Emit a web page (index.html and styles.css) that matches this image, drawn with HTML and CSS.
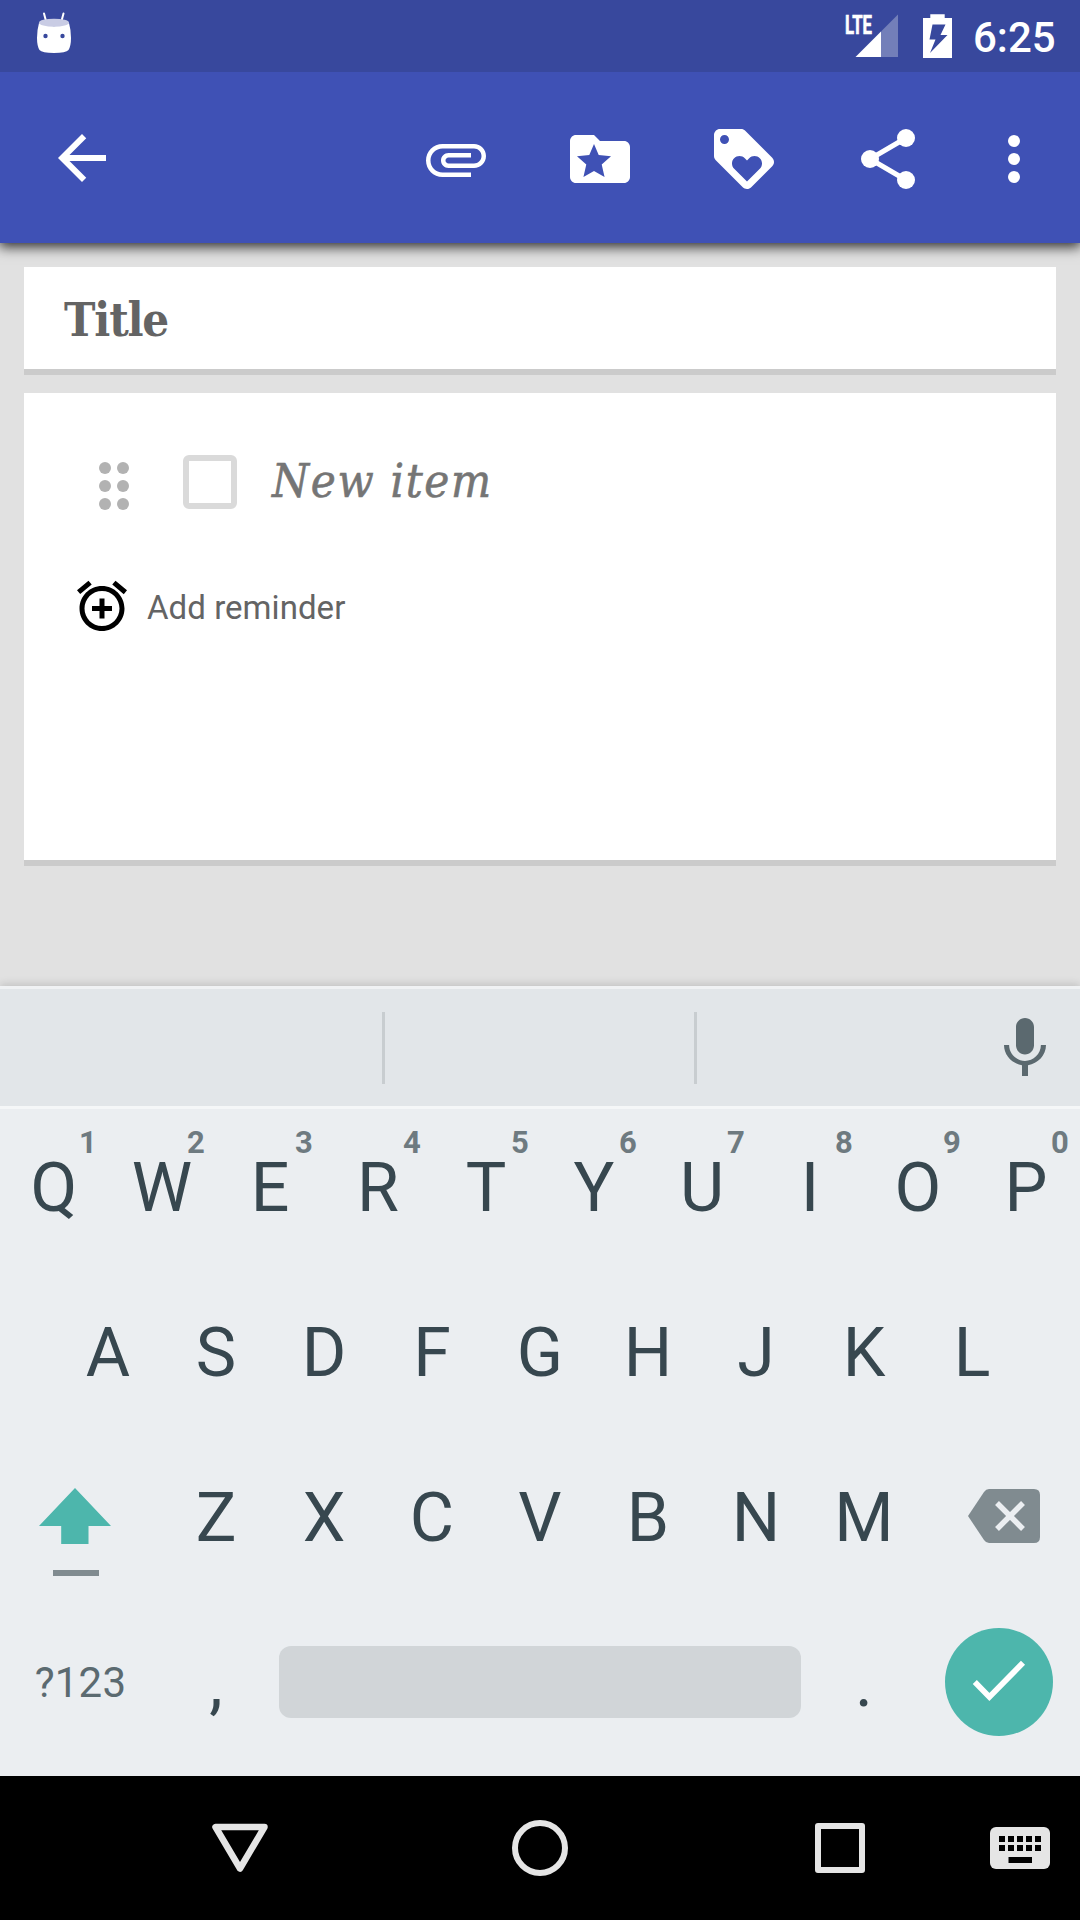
FILE: index.html
```html
<!DOCTYPE html>
<html lang="en">
<head>
<meta charset="utf-8">
<title>Edit note</title>
<link rel="stylesheet" href="styles.css">
</head>
<body>
<div class="screen">
  <header class="status">
    <svg class="status-robot" width="36" height="42" viewBox="36 12 36 42">
      <path d="M44 13.500L46 21M63.500 13.500L61.500 21" stroke="#fff" stroke-width="2" stroke-linecap="round"/>
      <path d="M39 23Q54 29.500 69 23Q71 30 71 38Q71 46 68.500 50Q66 53 54 53Q42 53 39.500 50Q37 46 37 38Q37 30 39 23z" fill="#fff"/>
      <ellipse cx="54" cy="22.700" rx="15" ry="4" fill="#c9cce4"/>
      <circle cx="45.500" cy="36" r="2.200" fill="#38489d"/><circle cx="62.500" cy="36" r="2.200" fill="#38489d"/>
    </svg>
    <svg class="status-signal" width="56" height="52" viewBox="844 7 56 52">
      <text class="lte" x="845" y="33.500" textLength="27" lengthAdjust="spacingAndGlyphs">LTE</text>
      <path d="M881 31.500L898 14.500V57H881z" fill="#737fb9"/>
      <path d="M855.500 57L881 31.500V57z" fill="#fff"/>
    </svg>
    <svg class="status-battery" width="30" height="46" viewBox="923 13 30 46">
      <path d="M930.300 14.200H944.700V18H952V58H923V18H930.300z" fill="#fff"/>
      <path d="M932.500 24.500H945.500L940.500 35H947.500L930 53L935.500 39.500H929.500z" fill="#38489d"/>
    </svg>
    <span class="clock">6:25</span>
  </header>

  <nav class="toolbar">
    <svg class="icon back" viewBox="0 0 24 24"><path d="M20 11H7.830l5.590-5.590L12 4l-8 8 8 8 1.410-1.410L7.830 13H20z"/></svg>
    <div class="actions">
      <svg class="icon" viewBox="0 0 24 24"><path d="M7.500 18C4.460 18 2 15.540 2 12.500S4.460 7 7.500 7H18c2.210 0 4 1.790 4 4s-1.790 4-4 4H9.500C8.120 15 7 13.880 7 12.500S8.120 10 9.500 10H17v1.500H9.500c-.55 0-1 .45-1 1s.45 1 1 1H18c1.380 0 2.500-1.120 2.500-2.500S19.380 8.500 18 8.500H7.500c-2.210 0-4 1.790-4 4s1.790 4 4 4H17V18z"/></svg>
      <svg class="icon" viewBox="0 0 24 24"><path fill-rule="evenodd" d="M20 6h-8l-2-2H4c-1.100 0-2 .9-2 2v12c0 1.100.9 2 2 2h16c1.100 0 2-.9 2-2V8c0-1.100-.9-2-2-2zM10 7l1.570 3.700 4.100.35-3.100 2.750.95 4.200L10 16l-3.520 2 .95-4.200-3.100-2.750 4.100-.35z"/></svg>
      <svg class="icon" viewBox="0 0 24 24"><path d="M21.410 11.580l-9-9C12.050 2.220 11.550 2 11 2H4c-1.100 0-2 .9-2 2v7c0 .55.22 1.050.59 1.420l9 9c.36.36.86.58 1.410.58.55 0 1.050-.22 1.410-.59l7-7c.37-.36.59-.86.59-1.410 0-.55-.23-1.060-.59-1.420zM5.500 7C4.670 7 4 6.330 4 5.500S4.670 4 5.500 4 7 4.670 7 5.500 6.330 7 5.500 7zm11.770 8.270L13 19.540l-4.270-4.270C8.280 14.810 8 14.190 8 13.500c0-1.380 1.120-2.500 2.500-2.500.69 0 1.320.28 1.770.74l.73.72.73-.73c.45-.45 1.080-.73 1.770-.73 1.380 0 2.500 1.120 2.500 2.500 0 .69-.28 1.320-.73 1.770z"/></svg>
      <svg class="icon" viewBox="0 0 24 24"><path d="M18 5L6 12l12 7" fill="none" stroke="#fff" stroke-width="1.650"/><circle cx="18" cy="5" r="3"/><circle cx="6" cy="12" r="3"/><circle cx="18" cy="19" r="3"/></svg>
      <svg class="icon more" viewBox="0 0 24 24"><circle cx="12" cy="6" r="2"/><circle cx="12" cy="12" r="2"/><circle cx="12" cy="18" r="2"/></svg>
    </div>
  </nav>

  <main class="note">
    <section class="card title-card"><span class="title">Title</span></section>
    <section class="card body-card">
      <div class="item">
        <svg class="handle" width="32" height="48" viewBox="0 0 32 48" fill="#b2b2b2"><circle cx="7" cy="6" r="6"/><circle cx="25" cy="6" r="6"/><circle cx="7" cy="24" r="6"/><circle cx="25" cy="24" r="6"/><circle cx="7" cy="42" r="6"/><circle cx="25" cy="42" r="6"/></svg>
        <span class="checkbox"></span>
        <span class="item-text">New item</span>
      </div>
      <div class="reminder">
        <svg width="60" height="60" viewBox="0 0 24 24"><path d="M7.880 3.390L6.600 1.860 2 5.710l1.290 1.530 4.590-3.850zM22 5.720l-4.600-3.860-1.290 1.530 4.600 3.860L22 5.720zM12 4c-4.970 0-9 4.030-9 9s4.020 9 9 9c4.970 0 9-4.030 9-9s-4.030-9-9-9zm0 16c-3.870 0-7-3.130-7-7s3.130-7 7-7 7 3.130 7 7-3.130 7-7 7zm1-11h-2v3H8v2h3v3h2v-3h3v-2h-3V9z"/></svg>
        <span class="reminder-text">Add reminder</span>
      </div>
    </section>
  </main>

  <section class="keyboard">
    <div class="suggestions">
      <span></span><span></span>
      <div class="voice"><svg width="72" height="72" viewBox="0 0 24 24" fill="#5b696f"><path d="M12 14.200c1.660 0 3-1.440 3-3.100V5c0-1.660-1.340-3-3-3S9 3.340 9 5v6.100c0 1.660 1.340 3.100 3 3.100zm5.300-3.200c0 3-2.540 5.300-5.300 5.300S6.700 14 6.700 11H5c0 3.410 2.720 6.230 6 6.720V21.300h2v-3.580c3.280-.48 6-3.300 6-6.720h-1.700z"/></svg></div>
    </div>
    <div class="keys">
      <div class="row">
        <span class="key">Q<sup class="hint">1</sup></span><span class="key">W<sup class="hint">2</sup></span><span class="key">E<sup class="hint">3</sup></span><span class="key">R<sup class="hint">4</sup></span><span class="key">T<sup class="hint">5</sup></span><span class="key">Y<sup class="hint">6</sup></span><span class="key">U<sup class="hint">7</sup></span><span class="key">I<sup class="hint">8</sup></span><span class="key">O<sup class="hint">9</sup></span><span class="key">P<sup class="hint">0</sup></span>
      </div>
      <div class="row">
        <span class="key">A</span><span class="key">S</span><span class="key">D</span><span class="key">F</span><span class="key">G</span><span class="key">H</span><span class="key">J</span><span class="key">K</span><span class="key">L</span>
      </div>
      <div class="row">
        <svg width="162" height="157" viewBox="0 1439 162 157">
          <path d="M75 1488L111 1526H88.500V1544H61.200V1526H39z" fill="#4db6ac"/>
          <rect x="53" y="1570" width="46" height="6" fill="#808b90"/>
        </svg>
        <span class="key">Z</span><span class="key">X</span><span class="key">C</span><span class="key">V</span><span class="key">B</span><span class="key">N</span><span class="key">M</span>
        <svg width="162" height="157" viewBox="918 1439 162 157">
          <path d="M989 1489H1034Q1040 1489 1040 1495V1537Q1040 1543 1034 1543H989Q986 1543 984 1540L968 1516L984 1492Q986 1489 989 1489z" fill="#808b90"/>
          <path d="M997 1503L1023 1529M1023 1503L997 1529" stroke="#ebeef1" stroke-width="5.500"/>
        </svg>
      </div>
      <div class="row">
        <span class="key symbols">?123</span><span class="key">,</span><span class="space"></span><span class="key">.</span>
        <svg width="162" height="157" viewBox="918 1604 162 157">
          <circle cx="999" cy="1682" r="54" fill="#4db6ac"/>
          <path d="M974.800 1682L989.400 1697L1023 1662.800" fill="none" stroke="#fff" stroke-width="5.700"/>
        </svg>
      </div>
    </div>
  </section>

  <footer class="navbar">
    <svg width="60" height="60" viewBox="210 1818 60 60"><path d="M215.500 1827H264.500L240 1868.500z" fill="none" stroke="#e5e5e5" stroke-width="6.500" stroke-linejoin="round"/></svg>
    <svg width="60" height="60" viewBox="510 1818 60 60"><circle cx="540" cy="1848" r="25" fill="none" stroke="#e5e5e5" stroke-width="6"/></svg>
    <svg width="60" height="60" viewBox="810 1818 60 60"><path d="M818 1826H862V1870H818z" fill="none" stroke="#e5e5e5" stroke-width="6" stroke-linejoin="round"/></svg>
    <svg width="60" height="60" viewBox="990 1818 60 60"><rect x="990" y="1827" width="60" height="42" rx="6" fill="#e5e5e5"/><path d="M999 1839H1041M999 1848H1041" stroke="#000" stroke-width="6" stroke-dasharray="6 3"/><path d="M1008.500 1860H1032" stroke="#000" stroke-width="6"/></svg>
  </footer>
</div>
</body>
</html>
```
FILE: styles.css
```css
* { box-sizing: border-box; }
body { margin: 0; font-family: Roboto, sans-serif; background: #e1e1e1; }
svg { display: block; flex: none; }

.screen { width: 1080px; height: 1920px; display: flex; flex-direction: column; overflow: hidden; }

.status { height: 72px; flex: none; display: flex; align-items: flex-start; background: #38489d; padding: 7px 24px 0 36px; color: #fff; z-index: 2; }
.status-robot { margin-top: 5px; }
.status-signal { margin: 0 23px 0 auto; }
.status-battery { margin: 6px 20px 0 0; }
.lte { font: 700 26px Roboto, sans-serif; fill: #fff; stroke: #fff; stroke-width: .7px; }
.clock { width: 83px; margin-top: 6px; font-size: 42px; font-weight: 500; line-height: 50px; white-space: nowrap; }

.toolbar { height: 171px; flex: none; display: flex; align-items: center; justify-content: space-between; padding: 1px 30px 0 46px; background: #3f51b5; box-shadow: 0 3px 12px 1px rgba(0, 0, 0, .8); z-index: 1; }
.icon { width: 72px; height: 72px; fill: #fff; }
.back { margin-bottom: 1px; }
.actions { display: flex; gap: 72px; padding-top: 1px; }
.more { margin-left: -18px; }

.note { height: 743px; flex: none; display: flex; flex-direction: column; gap: 18px; padding: 24px 24px 0; }
.card { background: #fff; border-bottom: 6px solid #cbcbcb; }
.title-card { height: 108px; display: flex; align-items: center; padding: 3px 0 0 40px; }
.title { font: 700 47px/60px "DejaVu Serif Condensed", "DejaVu Serif", serif; font-stretch: condensed; letter-spacing: -1.2px; color: #646464; }
.body-card { height: 473px; padding: 62px 0 0 48px; }
.item { display: flex; height: 54px; padding-left: 26px; }
.handle { margin-top: 7px; }
.checkbox { width: 54px; height: 54px; margin-left: 53px; border: 6px solid #dadada; border-radius: 6px; }
.item-text { margin-left: 35px; font: italic 400 47px/52px "DejaVu Serif Condensed", "DejaVu Serif", serif; font-stretch: condensed; letter-spacing: 1.7px; color: #757575; -webkit-text-stroke: .6px #757575; white-space: nowrap; }
.reminder { display: flex; align-items: center; gap: 15px; margin-top: 67px; }
.reminder-text { padding-top: 3px; font-size: 33px; line-height: 57px; letter-spacing: .05px; color: #646464; }

.keyboard { height: 790px; flex: none; background: #ebeef1; box-shadow: 0 -2px 8px rgba(0, 0, 0, .14); }
.suggestions { height: 123px; display: grid; grid-template-columns: 385px 312px 1fr; align-items: center; background: #e2e6e9; border-top: 3px solid #f0f2f4; border-bottom: 3px solid #f5f7f8; }
.suggestions span { height: 72px; border-right: 3px solid #c8cdd0; margin-top: 1px; }
.voice { display: flex; justify-content: flex-end; padding-right: 19px; }
.keys { display: flex; flex-direction: column; gap: 8px; }
.row { height: 157px; display: flex; justify-content: center; }
.key { position: relative; width: 108px; text-align: center; font-size: 68px; line-height: 159px; color: #37474f; }
.hint { position: absolute; left: 68px; top: 15px; width: 40px; font-size: 31px; line-height: 38px; font-weight: 700; color: #6e7a80; }
.symbols { width: 162px; padding-right: 1px; font-size: 42px; line-height: 157px; letter-spacing: .2px; color: #5b6a70; }
.space { width: 522px; height: 72px; margin: 42px 9px 0; border-radius: 12px; background: #d1d5d8; }

.navbar { height: 144px; flex: none; display: grid; grid-template-columns: 60px 60px 60px 60px; column-gap: 240px; padding: 42px 30px 0 210px; background: #000; }
.navbar svg:last-child { margin-left: -120px; }
```
